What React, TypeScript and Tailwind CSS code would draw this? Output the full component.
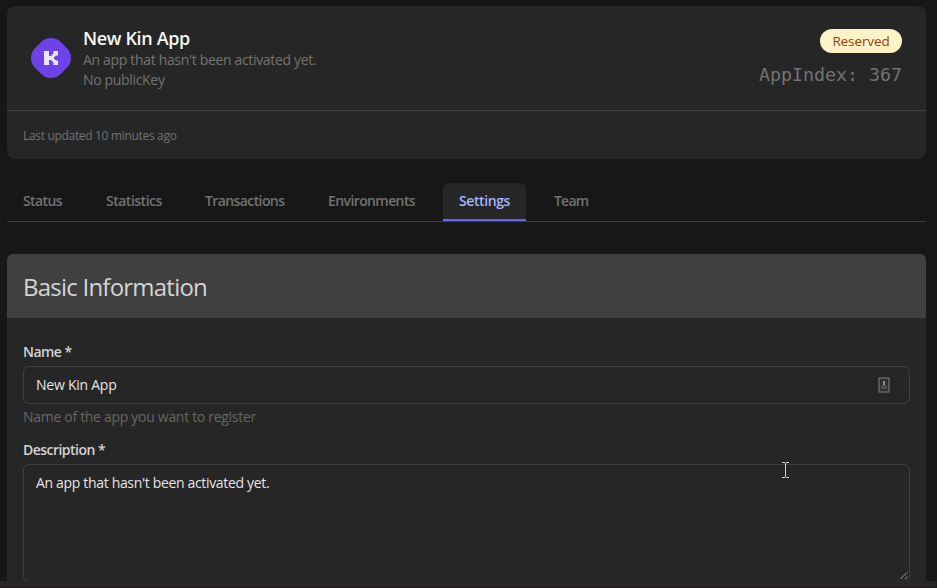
import React from 'react'

const sans = "font-['Open_Sans','Noto_Sans',sans-serif]"

const tabs: { label: string; cell: string; text: string }[] = [
  { label: 'Status', cell: 'w-[83px]', text: 'tracking-[-0.6px]' },
  { label: 'Statistics', cell: 'w-[99px]', text: 'tracking-[-0.5px]' },
  { label: 'Transactions', cell: 'w-[123px]', text: 'tracking-[-0.6px]' },
  { label: 'Environments', cell: 'w-[131px]', text: 'tracking-[-0.6px]' },
  { label: 'Settings', cell: 'w-[83px]', text: 'tracking-[-0.4px]' },
  { label: 'Team', cell: 'ml-3 w-16', text: 'tracking-[-0.8px]' },
]

function Logo() {
  return (
    <svg width="40" height="40" viewBox="0 0 40 40" className="block shrink-0">
      <path
        d="M20 0C24 0 27 1.400 30 4.200L35.800 10C38.600 13 40 16 40 20C40 24 38.600 27 35.800 30L30 35.800C27 38.600 24 40 20 40C16 40 13 38.600 10 35.800L4.200 30C1.400 27 0 24 0 20C0 16 1.400 13 4.200 10L10 4.200C13 1.400 16 0 20 0Z"
        fill="#6f41e8"
      />
      <path
        d="M13 13h5v5h2l2.500-2.500V13H27v4.500h-2L22.500 20l2.500 2.500h2V27h-4.500v-2.500L20 22h-2v5h-5Z"
        fill="#ebe8f5"
      />
    </svg>
  )
}

function AppCard() {
  return (
    <section className="flex h-[153px] flex-col rounded-lg bg-[#262626]">
      <div className="flex h-[104px] items-start justify-between pt-[19px] pr-6 pl-6">
        <div className="flex">
          <div className="pt-[13px]">
            <Logo />
          </div>
          <div className="ml-3 text-sm leading-5 text-[#737373]">
            <h1 className="text-lg leading-[26px] font-semibold tracking-[-0.35px] text-[#f5f5f5]">New Kin App</h1>
            <div className="-mt-px tracking-[-0.33px]">
              <p>An app that hasn't been activated yet.</p>
              <p>No publicKey</p>
            </div>
          </div>
        </div>
        <div className="flex flex-col items-end pt-1">
          <span className="flex h-6 w-[82px] items-center justify-center rounded-full bg-[#fef3c7] text-[13.500px] font-medium tracking-[-0.1px] text-[#92400e]">
            Reserved
          </span>
          <span className="mt-2 font-['DejaVu_Sans_Mono',monospace] text-[18.270px] leading-7 text-[#737373]">
            AppIndex: 367
          </span>
        </div>
      </div>
      <div className="flex h-[49px] items-center border-t border-[#404040] px-4 pt-0.5 text-xs tracking-[-0.32px] text-[#737373]">
        Last updated 10 minutes ago
      </div>
    </section>
  )
}

function Tabs() {
  return (
    <nav className="mt-6 flex h-[39px] border-b border-[#404040]">
      {tabs.map((tab) => (
        <a
          key={tab.label}
          className={`flex h-[38px] items-center pl-4 text-sm font-semibold whitespace-nowrap ${tab.cell} ${tab.text} ${
            tab.label === 'Settings'
              ? 'rounded-t-md border-b-2 border-[#6366f1] bg-[#262626] text-[#a5b4fc]'
              : 'pb-0.5 text-[#737373]'
          }`}
        >
          {tab.label}
        </a>
      ))}
    </nav>
  )
}

function Resizer() {
  return (
    <svg width="9" height="9" viewBox="0 0 9 9" className="absolute right-0 bottom-px" stroke="#d4d4d4" strokeDasharray="1 0.500">
      <path d="M0.500 8L7.500 1M5 8L7.500 5.500" />
    </svg>
  )
}

function Settings() {
  return (
    <section className="mt-8 flex h-[327px] flex-col overflow-hidden rounded-t-md bg-[#262626]">
      <header className="flex h-16 shrink-0 items-center bg-[#404040] px-4 pt-0.5">
        <h2 className="text-2xl tracking-[-0.77px] text-[#d4d4d4]">Basic Information</h2>
      </header>
      <div className="flex flex-col px-4 pt-6 text-sm leading-5">
        <label className="font-semibold tracking-[-0.55px] text-[#d4d4d4]">Name *</label>
        <div className="mt-1 flex h-[38px] items-center justify-between rounded-md border border-[#404040] pr-[19px] pl-3 text-[#e5e5e5]">
          <span className="tracking-[-0.25px]">New Kin App</span>
          <svg width="12" height="16" viewBox="0 0 12 16">
            <rect x="1" y="1" width="10" height="14" fill="#303030" stroke="#808080" />
            <path d="M5 4h2v4H5z" fill="#909090" />
            <path d="M4 8h4v1h1v3H3V9h1z" fill="#505050" />
          </svg>
        </div>
        <p className="mt-[3px] tracking-[-0.3px] text-[#666666]">Name of the app you want to register</p>
        <label className="mt-[13px] font-semibold tracking-[-0.53px] text-[#d4d4d4]">Description *</label>
        <div className="relative mt-1 h-[118px] shrink-0 rounded-md border border-[#404040] px-3 pt-2 text-[#e5e5e5]">
          <span className="tracking-[-0.33px]">An app that hasn't been activated yet.</span>
          <Resizer />
        </div>
      </div>
    </section>
  )
}

export default function App() {
  return (
    <div className={`relative h-[588px] w-[937px] overflow-hidden bg-[#171717] ${sans}`}>
      <main className="pt-1.5 pr-[11px] pl-[7px]">
        <AppCard />
        <Tabs />
        <Settings />
      </main>
      <div className="h-[7px] border-b border-[#211a1f] bg-[#262626]" />
      <svg width="7" height="16" viewBox="0 0 7 16" className="absolute top-[462px] left-[782px]" fill="#d4d4d4" shapeRendering="crispEdges">
        <path d="M0 0h3v1H0zM4 0h3v1H4zM3 1h1v14H3zM0 15h3v1H0zM4 15h3v1H4z" />
      </svg>
    </div>
  )
}
